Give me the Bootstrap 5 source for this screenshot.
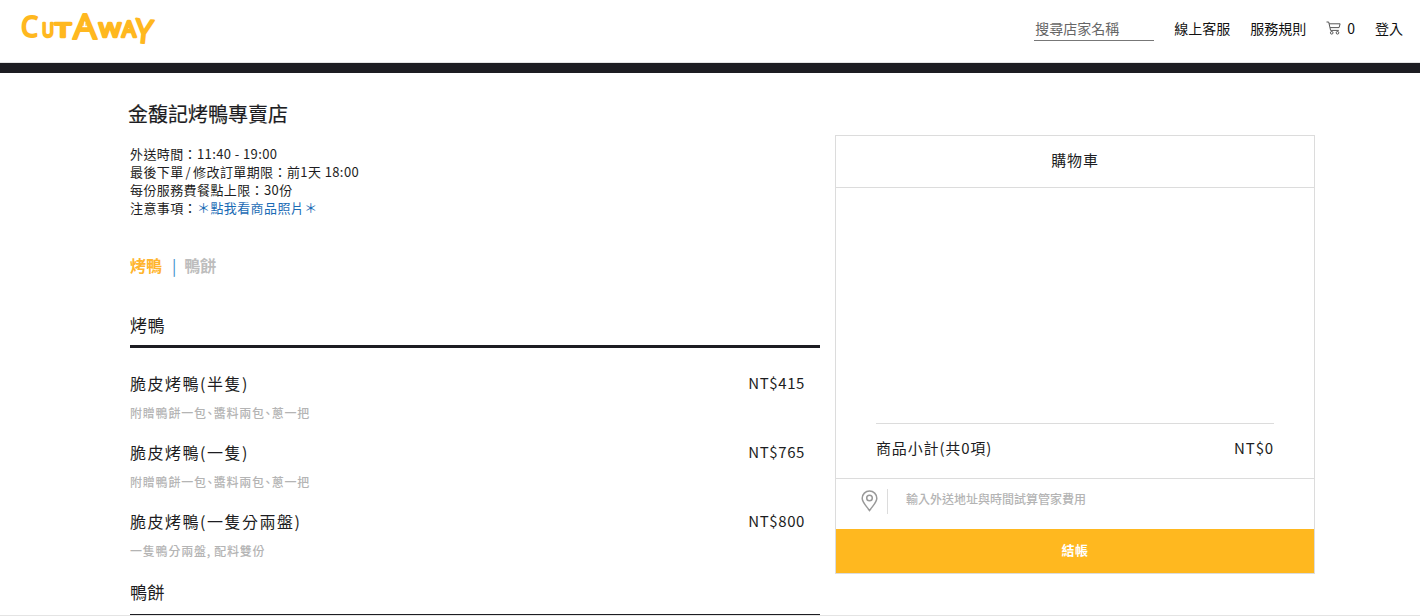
<!DOCTYPE html>
<html lang="zh-Hant">
<head>
<meta charset="utf-8">
<title>金馥記烤鴨專賣店</title>
<link href="https://cdn.jsdelivr.net/npm/bootstrap@5.3.0/dist/css/bootstrap.min.css" rel="stylesheet">
<style>
html,body{height:616px;overflow:hidden}
body{font-family:"Noto Sans CJK TC","Noto Sans",sans-serif;color:#1d1d22;background:#fff;border-bottom:1px solid #e4e4e4}
.topbar{height:63px;padding:0 17px 6px 20px;border-bottom:1px solid #e4e4e4}
.logo-svg{display:block;width:140px;height:36px;overflow:visible}
.logo-svg text{font-family:"Noto Sans",sans-serif;font-weight:400;fill:#ffb81f;stroke:#ffb81f;stroke-width:2.6px;stroke-linejoin:round;stroke-linecap:round}
.logo-svg .big-letter{stroke-width:2px}
.logo-eye{stroke:#ffb81f;stroke-width:1}
.search-box{width:120px;height:24px;margin:1px 20px 0 0;border:0;border-bottom:1px solid #777;border-radius:0;padding:0 0 0 1px;font-size:14px;color:#666;outline:0;background:none}
.search-box::placeholder{color:#666}
.top-link{font-size:14px;color:#111;text-decoration:none;margin-right:20px}
.top-link:last-child{margin-right:0}
.cart-link{display:flex;align-items:center;gap:6px}
.dark-strip{height:10px;background:#1d1d22}
.page-wrap{padding-left:130px;width:1315px}
.left-pane{width:690px;flex:none}
.shop-name{font-size:20px;font-weight:400;margin:30px 0 20px -2px;line-height:22px;-webkit-text-stroke:.2px #1d1d22}
.shop-info{font-size:13px;line-height:18px;letter-spacing:.4px;color:#1d1d22}
.shop-info a{color:#1a6bb5;text-decoration:none}
.wide-slash{margin:0 2px}
.cat-tabs{margin-top:38px;font-size:16px;font-weight:700;line-height:20px;color:#bdbdbd}
.cat-on{color:#ffb52e}
.cat-sep{color:#3d8fc9;font-weight:400;margin:0 8px 0 10px}
.sec-head{font-size:17px;line-height:24px;letter-spacing:.5px;border-bottom:3px solid #1d1d22;padding-bottom:8px;margin:0}
.sec-one{margin-top:38px}
.sec-two{margin-top:20px;padding-bottom:10px}
.dish{padding:0 15px 0 0;margin:0}
.dish-first{margin-top:24px}
.dish+.dish{margin-top:19px}
.dish-name{font-size:16px;line-height:22px;letter-spacing:1.5px;color:#1d1d22}
.dish-price{font-size:15px;line-height:22px;letter-spacing:.6px;color:#1d1d22}
.dish-note{font-size:12px;font-weight:500;line-height:18px;letter-spacing:.8px;color:#b4b4b4;margin-top:10px}
.mark-tight{font-feature-settings:"palt"}
.wide-comma{margin-right:3px}
.cart-pane{width:480px;height:439px;margin:62px 0 0 15px;border:1px solid #dcdcdc;flex:none}
.cart-head{height:52px;line-height:48px;font-size:15px;letter-spacing:.8px;text-align:center;border-bottom:1px solid #dcdcdc}
.cart-body{flex:1}
.cart-sum{margin:0 40px;border-top:1px solid #dcdcdc;height:55px;padding-bottom:6px;font-size:15px;letter-spacing:.85px}
.cart-addr{height:51px;border-top:1px solid #dcdcdc;padding:0 0 6px 25px;font-size:12px;font-weight:500;color:#b4b4b4}
.addr-line{width:1px;height:25px;background:#dcdcdc;margin:0 18px 0 9px}
.addr-text{margin-bottom:4px}
.pay-btn{height:44px;border:0;border-radius:0;background:#ffb81f;color:#fff;font-size:13px;font-weight:700;letter-spacing:.5px;line-height:42px;padding:0 0 2px}
.pay-btn:hover{background:#ffb81f;color:#fff}
</style>
</head>
<body>
<header class="topbar d-flex align-items-center justify-content-between">
  <a href="#" aria-label="Cutaway">
    <svg class="logo-svg" viewBox="0 0 140 36" role="img">
      <text class="big-letter" x="1" y="27" font-size="29" textLength="17" lengthAdjust="spacingAndGlyphs">C</text>
      <text x="22" y="27" font-size="20" textLength="12" lengthAdjust="spacingAndGlyphs">U</text>
      <text x="35" y="27" font-size="20" textLength="16" lengthAdjust="spacingAndGlyphs">T</text>
      <text class="big-letter" x="53" y="29" font-size="35" textLength="24" lengthAdjust="spacingAndGlyphs">A</text>
      <text x="79" y="27" font-size="20" textLength="22" lengthAdjust="spacingAndGlyphs">W</text>
      <text x="102" y="27" font-size="21" textLength="14" lengthAdjust="spacingAndGlyphs">A</text>
      <text class="big-letter" x="115" y="33" font-size="33" textLength="18" lengthAdjust="spacingAndGlyphs" transform="rotate(6 125 20)">Y</text>
      <path class="logo-eye" d="M63 13v3M66 13v3"/>
    </svg>
  </a>
  <nav class="d-flex align-items-center">
    <input class="search-box" type="text" placeholder="搜尋店家名稱" aria-label="搜尋店家名稱">
    <a class="top-link" href="#">線上客服</a>
    <a class="top-link" href="#">服務規則</a>
    <a class="top-link cart-link" href="#">
      <svg width="15" height="14" viewBox="0 0 15 14" fill="none" stroke="#444" stroke-width=".9"><path d="M.5 1h2.2l1.9 8.4h8.2"/><path d="M3.2 2.8h10.9l-1 3.8H4.1"/><circle cx="5.7" cy="11.8" r="1.3"/><circle cx="11.5" cy="11.8" r="1.3"/></svg>
      <span>0</span>
    </a>
    <a class="top-link" href="#">登入</a>
  </nav>
</header>
<div class="dark-strip"></div>
<main class="page-wrap d-flex">
  <section class="left-pane">
    <h1 class="shop-name">金馥記烤鴨專賣店</h1>
    <div class="shop-info">
      <div>外送時間：11:40 - 19:00</div>
      <div>最後下單<span class="wide-slash">/</span>修改訂單期限：前1天 18:00</div>
      <div>每份服務費餐點上限：30份</div>
      <div>注意事項：<a href="#">＊點我看商品照片＊</a></div>
    </div>
    <div class="cat-tabs"><span class="cat-on">烤鴨</span><span class="cat-sep">|</span><span>鴨餅</span></div>
    <h2 class="sec-head fw-normal sec-one">烤鴨</h2>
    <div class="dish dish-first">
      <div class="d-flex justify-content-between"><span class="dish-name">脆皮烤鴨(半隻)</span><span class="dish-price">NT$415</span></div>
      <div class="dish-note">附贈鴨餅一包<span class="mark-tight">、</span>醬料兩包<span class="mark-tight">、</span>蔥一把</div>
    </div>
    <div class="dish">
      <div class="d-flex justify-content-between"><span class="dish-name">脆皮烤鴨(一隻)</span><span class="dish-price">NT$765</span></div>
      <div class="dish-note">附贈鴨餅一包<span class="mark-tight">、</span>醬料兩包<span class="mark-tight">、</span>蔥一把</div>
    </div>
    <div class="dish">
      <div class="d-flex justify-content-between"><span class="dish-name">脆皮烤鴨(一隻分兩盤)</span><span class="dish-price">NT$800</span></div>
      <div class="dish-note">一隻鴨分兩盤<span class="wide-comma">,</span>配料雙份</div>
    </div>
    <h2 class="sec-head fw-normal sec-two">鴨餅</h2>
  </section>
  <aside class="cart-pane d-flex flex-column">
    <div class="cart-head">購物車</div>
    <div class="cart-body"></div>
    <div class="cart-sum d-flex justify-content-between align-items-center"><span>商品小計(共0項)</span><span>NT$0</span></div>
    <div class="cart-addr d-flex align-items-center">
      <svg width="17" height="22" viewBox="0 0 17 22" fill="none" stroke="#999" stroke-width="1.5"><path d="M8.5 20.5C5 15.5 1.2 12.5 1.2 8.3a7.3 7.3 0 0 1 14.6 0c0 4.2-3.8 7.2-7.3 12.2z"/><circle cx="8.5" cy="8" r="2.8"/></svg>
      <span class="addr-line"></span>
      <span class="addr-text">輸入外送地址與時間試算管家費用</span>
    </div>
    <button class="btn pay-btn w-100" type="button">結帳</button>
  </aside>
</main>
<script src="https://cdn.jsdelivr.net/npm/bootstrap@5.3.0/dist/js/bootstrap.bundle.min.js"></script>
</body>
</html>
